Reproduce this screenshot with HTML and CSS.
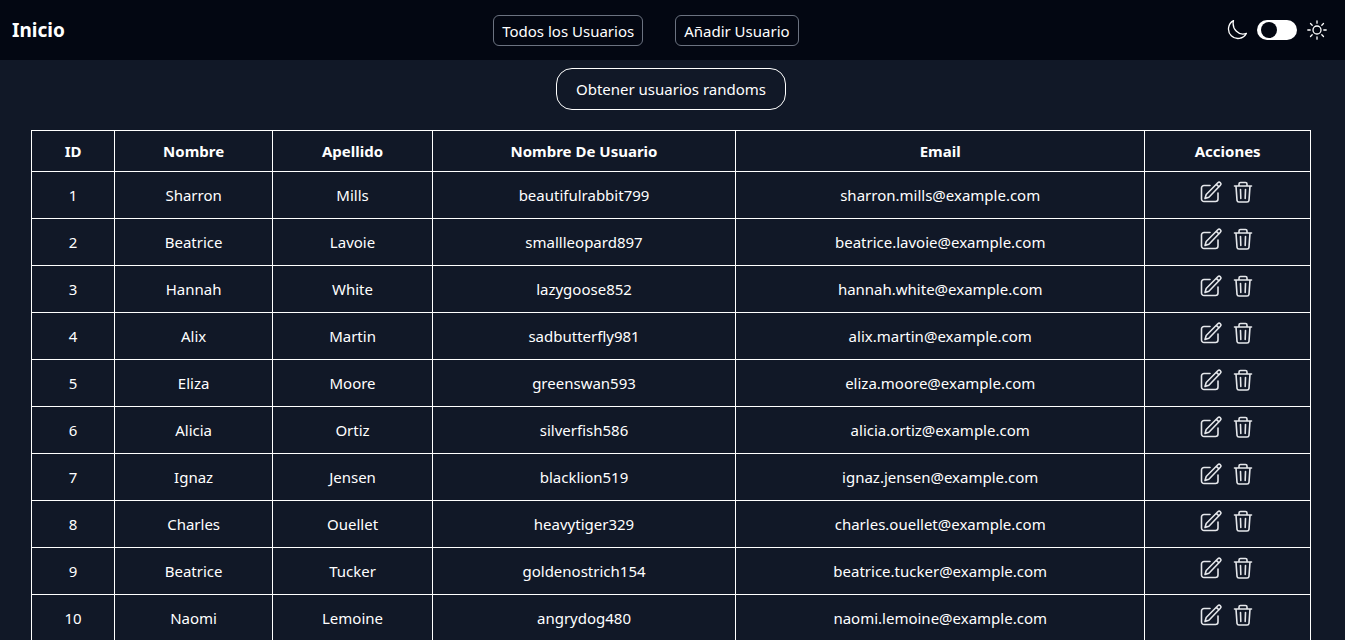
FILE: index.html
```
<!DOCTYPE html>
<html lang="es">
<head>
<meta charset="utf-8">
<title>Usuarios</title>
<link rel="stylesheet" href="styles.css">
</head>
<body>
<svg class="sprite" aria-hidden="true">
  <symbol id="edit" viewBox="0 0 24 24">
    <path d="M11 5.500H5A2.500 2.500 0 0 0 2.500 8v11A2.500 2.500 0 0 0 5 21.500h11.500A2.500 2.500 0 0 0 19 19v-6"/>
    <path d="M6 18.500l1.200-4L18.800 2.700a1.800 1.800 0 0 1 2.600 2.600L9.900 17.200 6 18.500zM17.300 4.300l2.600 2.600"/>
  </symbol>
  <symbol id="trash" viewBox="0 0 24 24">
    <path d="M5 6l1 14.300a2 2 0 0 0 2 1.700h8a2 2 0 0 0 2-1.700L19 6M3.500 6h17M8 6V4A1.500 1.500 0 0 1 9.500 2.500h5A1.500 1.500 0 0 1 16 4V6M9.500 9.500l.3 9M14.500 9.500l-.3 9"/>
  </symbol>
</svg>
<header class="navbar">
  <a class="brand" href="#">Inicio</a>
  <nav class="links">
    <a class="nav-link" href="#">Todos los Usuarios</a>
    <a class="nav-link" href="#">Añadir Usuario</a>
  </nav>
  <div class="theme">
    <svg class="theme-icon" viewBox="0 0 20 20" aria-hidden="true"><path d="M6.500 .6A9.500 9.500 0 1 0 19.400 13.400C12 16.300 4.500 9 6.500 .6z"/></svg>
    <input class="switch" type="checkbox" role="switch" aria-label="Modo claro">
    <svg class="theme-icon" viewBox="0 0 20 20" aria-hidden="true"><circle cx="10" cy="10" r="4"/><path d="M10 .8v2.400M10 16.800v2.400M.8 10h2.400M16.800 10h2.400M3.500 3.500l1.700 1.700M14.800 14.800l1.700 1.700M3.500 16.500l1.700-1.700M14.800 5.200l1.700-1.700"/></svg>
  </div>
</header>
<main class="content">
  <button class="fetch" type="button">Obtener usuarios randoms</button>
  <table class="users">
    <colgroup><col class="c-id"><col class="c-name"><col class="c-last"><col class="c-user"><col class="c-mail"><col class="c-act"></colgroup>
    <thead><tr><th>ID</th><th>Nombre</th><th>Apellido</th><th>Nombre De Usuario</th><th>Email</th><th>Acciones</th></tr></thead>
    <tbody id="rows"></tbody>
  </table>
</main>
<script src="users.js"></script>
</body>
</html>
```
FILE: users.js
```
const users = [
  ["Sharron", "Mills", "beautifulrabbit799"],
  ["Beatrice", "Lavoie", "smallleopard897"],
  ["Hannah", "White", "lazygoose852"],
  ["Alix", "Martin", "sadbutterfly981"],
  ["Eliza", "Moore", "greenswan593"],
  ["Alicia", "Ortiz", "silverfish586"],
  ["Ignaz", "Jensen", "blacklion519"],
  ["Charles", "Ouellet", "heavytiger329"],
  ["Beatrice", "Tucker", "goldenostrich154"],
  ["Naomi", "Lemoine", "angrydog480"]
];
const action = (icon, label) =>
  `<button class="action" type="button" aria-label="${label}"><svg class="icon"><use href="#${icon}"/></svg></button>`;
document.getElementById("rows").innerHTML = users.map(([name, last, user], i) => `
  <tr><td>${i + 1}</td><td>${name}</td><td>${last}</td><td>${user}</td>
  <td>${(name + "." + last).toLowerCase()}@example.com</td>
  <td><div class="actions">${action("edit", "Editar")}${action("trash", "Eliminar")}</div></td></tr>`).join("");
```
FILE: styles.css
```
* { box-sizing: border-box; }
body {
  margin: 0;
  background: #111827;
  color: #fff;
  font: 15px/24px "Segoe UI", "Noto Sans", "Open Sans", sans-serif;
}
a { color: inherit; text-decoration: none; }
button { font: inherit; color: inherit; background: none; cursor: pointer; }
.sprite { display: none; }
.navbar {
  display: flex;
  align-items: center;
  justify-content: space-between;
  height: 60px;
  padding: 0 18px 0 12px;
  background: #030712;
}
.brand { font-size: 19px; font-weight: 700; }
.links { display: flex; gap: 32px; }
.nav-link {
  padding: 3px 8px 2px;
  border: 1px solid #6b7280;
  border-radius: 6px;
}
.theme { display: flex; align-items: center; gap: 10px; }
.theme-icon { width: 20px; height: 20px; fill: none; stroke: #fff; stroke-width: 1.3; stroke-linecap: round; stroke-linejoin: round; }
.switch {
  appearance: none;
  display: flex;
  align-items: center;
  width: 40px;
  height: 20px;
  margin: 0;
  padding: 0 4px;
  border-radius: 10px;
  background: #fff;
}
.switch::before { content: ""; width: 16px; height: 16px; border-radius: 50%; background: #030712; }
.switch:checked { justify-content: flex-end; }
.content {
  display: flex;
  flex-direction: column;
  align-items: center;
  gap: 20px;
  padding: 8px 34px 0 31px;
}
.fetch {
  height: 42px;
  padding: 0 19px;
  border: 1px solid #fff;
  border-radius: 16px;
}
.users { width: 100%; table-layout: fixed; border-collapse: collapse; text-align: center; }
.users th, .users td { border: 1px solid #fff; padding: 0; }
.users th { height: 41px; font-weight: 700; }
.users td { height: 47px; }
.c-id { width: 6.5%; }
.c-name { width: 12.35%; }
.c-last { width: 12.5%; }
.c-user { width: 23.7%; }
.c-mail { width: 32%; }
.c-act { width: 12.95%; }
.actions { display: flex; justify-content: center; gap: 8px; padding: 0 2px 6px 0; }
.action { display: flex; padding: 0; border: 0; }
.icon { width: 24px; height: 24px; fill: none; stroke: #e5e7eb; stroke-width: 1.6; stroke-linecap: round; stroke-linejoin: round; }
```
